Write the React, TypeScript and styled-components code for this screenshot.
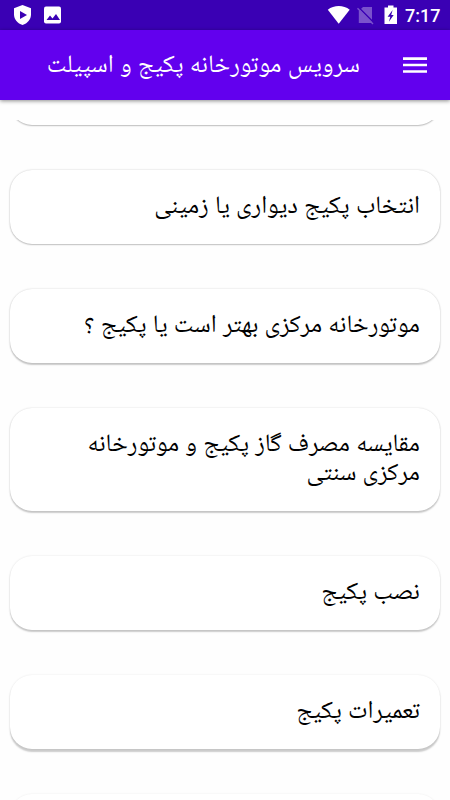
import React from "react";
import styled, { createGlobalStyle } from "styled-components";

const Global = createGlobalStyle`
  *{box-sizing:border-box}
  html,body{margin:0;padding:0;background:#fff}
`;

const Screen = styled.div`
  width: 450px;
  height: 800px;
  overflow: hidden;
  display: flex;
  flex-direction: column;
  background: #fefefe;
  direction: rtl;
  font-family: "Noto Naskh Arabic UI", "Noto Naskh Arabic", "Noto Sans Arabic", "DejaVu Sans", sans-serif;
`;

const StatusBar = styled.div`
  flex: none;
  height: 30px;
  padding: 0 10px 0 12px;
  background: #3a00b4;
  color: #fff;
  direction: ltr;
  display: flex;
  justify-content: space-between;
`;

const StatusIcons = styled.svg`
  display: block;
  height: 30px;
`;

const StatusGroup = styled.div`
  display: flex;
`;

const Clock = styled.span`
  font: 500 18px/31px Roboto, sans-serif;
  width: 35px;
  margin-left: 4px;
  white-space: nowrap;
`;

const AppBar = styled.header`
  flex: none;
  height: 70px;
  padding: 0 20px;
  background: #6200ee;
  color: #fff;
  display: flex;
  align-items: center;
  gap: 40px;
  box-shadow: 0 1px 4px rgba(0, 0, 0, 0.45);
`;

const MenuButton = styled.button`
  padding: 0;
  border: 0;
  background: none;
  color: inherit;
  width: 30px;
  height: 30px;
`;

const Title = styled.h1`
  margin: 0;
  font-size: 25px;
  font-weight: 400;
  line-height: 30px;
  white-space: nowrap;
  word-spacing: 0.7px;
`;

const List = styled.main`
  flex: 1;
  min-height: 0;
  margin-top: 20px;
  overflow: hidden;
  padding: 0 10px;
  display: flex;
  flex-direction: column;
  gap: 45px;
`;

const Card = styled.article<{ $lines?: number; $depth: number; $edge: number; $cut?: boolean }>`
  flex: none;
  height: ${p => (p.$lines === 2 ? 103 : 74)}px;
  margin-top: ${p => (p.$cut ? -69 : 0)}px;
  padding: 22px 20px;
  border-radius: 22px;
  background: #fff;
  color: #000;
  font-size: 25px;
  line-height: 29px;
  white-space: pre-line;
  word-spacing: 0.7px;
  box-shadow:
    0 ${p => p.$depth}px 1.5px rgba(0, 0, 0, 0.2),
    0 0 2px rgba(0, 0, 0, ${p => p.$edge});
`;

const items = [
  { text: "", depth: 0.5, edge: 0.22, cut: true },
  { text: "انتخاب پکیج دیواری یا زمینی", depth: 1, edge: 0.2 },
  { text: "موتورخانه مرکزی بهتر است یا پکیج ؟", depth: 1.4, edge: 0.17 },
  { text: "مقایسه مصرف گاز پکیج و موتورخانه\nمرکزی سنتی", depth: 1.7, edge: 0.14, lines: 2 },
  { text: "نصب پکیج", depth: 2, edge: 0.12 },
  { text: "تعمیرات پکیج", depth: 2.3, edge: 0.1 },
  { text: "", depth: 2.5, edge: 0.08 },
];

export default function App() {
  return (
    <>
      <Global />
      <Screen>
        <StatusBar>
          <StatusIcons width="52" viewBox="12 0 52 30">
            <path d="M22.5 5 31 8.3v6.2c0 5-3.6 9-8.5 10.5C17.6 23.5 14 19.5 14 14.5V8.3z" fill="#fff" />
            <path d="m20 11 7 4-7 4z" fill="#3a00b4" />
            <rect x="44" y="6.5" width="17" height="17" rx="2" fill="#fff" />
            <path d="m46.5 20 3.500-4.500 2.500 3 3.500-4.500 4 6z" fill="#3a00b4" />
          </StatusIcons>
          <StatusGroup>
            <StatusIcons width="76" viewBox="325 0 76 30">
              <path d="M327.8 9.7C334 4.7 343.500 4.7 349.7 9.7L338.7 23.7z" fill="#fff" />
              <path d="M363 7h9v16h-13.200V11z" fill="#7a52cc" />
              <path d="m358.500 7.200 15.500 15.700" stroke="#3a00b4" strokeWidth="1.500" />
              <path d="m357.500 8.200 15.500 15.700" stroke="#7a52cc" strokeWidth="1.400" />
              <path d="M388 5.500h5.500v2h3.500v16.500h-12.500v-16.500h3.500z" fill="#fff" />
              <path d="m392.600 10-5 6.700h2.700l-1.400 5 4.800-6.700h-2.500z" fill="#3a00b4" />
            </StatusIcons>
            <Clock>7:17</Clock>
          </StatusGroup>
        </StatusBar>
        <AppBar>
          <MenuButton aria-label="منو">
            <svg width="30" height="30" viewBox="0 0 30 30">
              <path d="M3 8.600h24M3 15h24M3 21.500h24" stroke="#fff" strokeWidth="2.700" />
            </svg>
          </MenuButton>
          <Title>سرویس موتورخانه پکیج و اسپیلت</Title>
        </AppBar>
        <List>
          {items.map((item, i) => (
            <Card key={i} $lines={item.lines} $depth={item.depth} $edge={item.edge} $cut={item.cut}>
              {item.text}
            </Card>
          ))}
        </List>
      </Screen>
    </>
  );
}
